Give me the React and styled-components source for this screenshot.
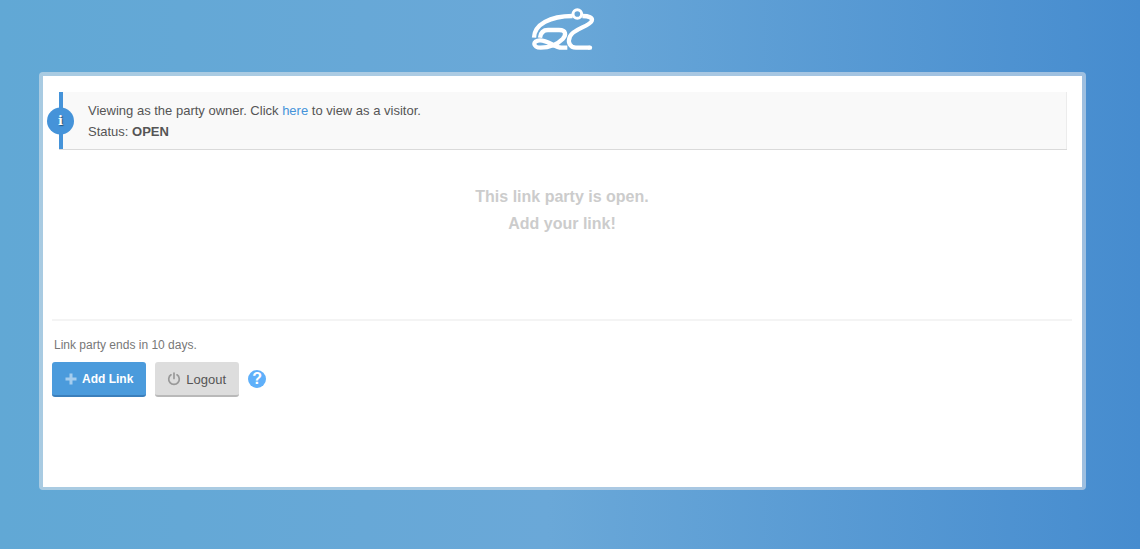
import styled, { createGlobalStyle } from "styled-components";

const GlobalStyle = createGlobalStyle`
  * {
    box-sizing: border-box;
  }

  body {
    margin: 0;
    background: #61a8d5;
    color: #555;
    font-family: "Liberation Sans", Arial, Helvetica, sans-serif;
    font-size: 13px;
    line-height: 21px;
  }
`;

const Page = styled.div`
  display: flex;
  flex-direction: column;
  min-height: 100vh;
  padding: 9px 54px 59px 39px;
  background: linear-gradient(90deg, #61a8d5 0%, #6aa8d8 48%, #468ccf 100%);
`;

const Header = styled.header`
  display: flex;
  justify-content: center;
  height: 63px;
`;

const Logo = styled.svg`
  width: 64px;
  height: 43px;
  overflow: visible;
  fill: none;
  stroke: #fff;
  stroke-width: 13;
`;

const Panel = styled.main`
  flex: 1;
  padding: 16px 10px 16px 9px;
  border: 4px solid rgba(228, 232, 236, 0.55);
  border-bottom-width: 3px;
  border-radius: 4px;
  background: #fff;
  background-clip: padding-box;
`;

const Notice = styled.section`
  position: relative;
  margin: 0 5px 0 7px;
  padding: 8px 25px 7px;
  border-left: 4px solid #4593d9;
  border-right: 1px solid #ececec;
  background: #f9f9f9;
  box-shadow: 0 1px 0 #dadada;

  p {
    margin: 0;
  }

  a {
    color: #4593d9;
    text-decoration: none;
  }
`;

const InfoBadge = styled.span`
  position: absolute;
  top: 50%;
  left: -16px;
  width: 27px;
  height: 27px;
  border-radius: 50%;
  transform: translateY(-50%);
  background: #4593d9;
  color: #fff;
  font-family: "DejaVu Serif", serif;
  font-size: 13px;
  font-weight: bold;
  line-height: 26px;
  text-align: center;
  text-shadow: 1px 1px 1px #24527c;
`;

const Message = styled.h1`
  margin: 0;
  padding: 34px 0 82px;
  color: #ccc;
  font-size: 16px;
  line-height: 27px;
  text-align: center;
`;

const Footer = styled.footer`
  border-top: 2px solid #f4f4f4;
  padding-top: 14px;
`;

const EndsIn = styled.p`
  margin: 0 2px 6px;
  color: #777;
  font-size: 12px;
`;

const Actions = styled.div`
  display: flex;
  align-items: center;
  gap: 9px;
`;

const Button = styled.button`
  display: flex;
  align-items: center;
  gap: ${({ $primary }) => ($primary ? "5px" : "6px")};
  height: 35px;
  padding: 1px 13px 0;
  border: none;
  border-bottom: 2px solid ${({ $primary }) => ($primary ? "#3b7fbb" : "#b9b9b9")};
  border-radius: 3px;
  background: ${({ $primary }) => ($primary ? "#4b9bdc" : "#ddd")};
  color: ${({ $primary }) => ($primary ? "#fff" : "#555")};
  font-family: inherit;
  font-size: ${({ $primary }) => ($primary ? "12px" : "13px")};
  font-weight: ${({ $primary }) => ($primary ? "bold" : "normal")};
  cursor: pointer;
`;

const ButtonIcon = styled.svg`
  width: 12px;
  height: 12px;
  overflow: visible;
  fill: none;
  stroke: ${({ $primary }) => ($primary ? "#a5cdee" : "#999")};
`;

const HelpButton = styled.button`
  width: 18px;
  height: 18px;
  margin-bottom: 2px;
  padding: 0;
  border: none;
  border-radius: 50%;
  background: #5fb0fa;
  color: #fff;
  font-family: inherit;
  font-size: 16px;
  font-weight: bold;
  line-height: 18px;
  cursor: pointer;
`;

export default function App() {
  return (
    <>
      <GlobalStyle />
      <Page>
        <Header>
          <Logo viewBox="33 26 192 129" role="img" aria-label="Frog logo">
            <path d="M42 112C43 72 90 47 158 47" />
            <circle cx="172" cy="41" r="13" strokeWidth="9" />
            <path d="M187 47C207 47 219 52 215 62C208 78 160 86 150 108C142 126 150 142 168 142H209" />
            <path d="M209 142H210" strokeLinecap="round" />
            <path d="M60 112C62 96 71 89 84 89H117C139 89 139 104 128 116C112 132 86 142 62 142C37 142 37 120 60 120C86 120 103 142 125 142H142" />
          </Logo>
        </Header>
        <Panel>
          <Notice>
            <InfoBadge>i</InfoBadge>
            <p>
              Viewing as the party owner. Click <a href="#visitor">here</a> to view as a visitor.
            </p>
            <p>
              Status: <strong>OPEN</strong>
            </p>
          </Notice>
          <Message>
            This link party is open.
            <br />
            Add your link!
          </Message>
          <Footer>
            <EndsIn>Link party ends in 10 days.</EndsIn>
            <Actions>
              <Button type="button" $primary>
                <ButtonIcon $primary viewBox="0 0 12 12" strokeWidth="3">
                  <path d="M6 0.5V11.5M0.5 6H11.5" />
                </ButtonIcon>
                Add Link
              </Button>
              <Button type="button">
                <ButtonIcon viewBox="0 0 12 12" strokeWidth="1.7" strokeLinecap="round">
                  <path d="M6 0V5.5M3 1.8A5.3 5.3 0 1 0 9 1.8" />
                </ButtonIcon>
                Logout
              </Button>
              <HelpButton type="button" aria-label="Help">?</HelpButton>
            </Actions>
          </Footer>
        </Panel>
      </Page>
    </>
  );
}
